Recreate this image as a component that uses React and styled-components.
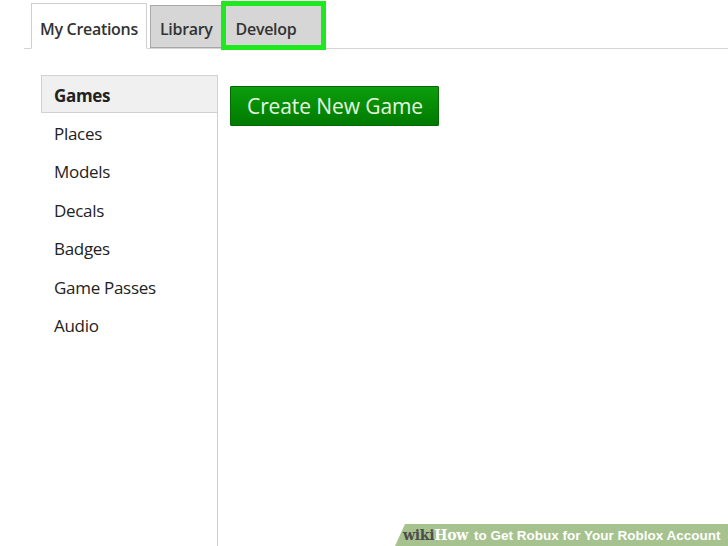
import React from "react";
import styled, { createGlobalStyle } from "styled-components";

const Global = createGlobalStyle`
  html, body { margin: 0; padding: 0; background: #fff; }
  body { font-family: "Open Sans", "Noto Sans", sans-serif; color: #222; }
  #root { min-height: 100vh; }
`;

const Page = styled.div`
  position: relative;
  height: 546px;
  overflow: hidden;
  display: flex;
  flex-direction: column;
`;

const TabBar = styled.div`
  margin-left: 24px;
  padding-left: 7px;
  height: 49px;
  border-bottom: 1px solid #d4d4d4;
  display: flex;
  align-items: flex-end;
  gap: 3px;
  box-sizing: border-box;
`;

const Tab = styled.div`
  box-sizing: border-box;
  height: ${(p) => (p.$active ? "46px" : "43px")};
  margin-bottom: ${(p) => (p.$active ? "-1px" : "0")};
  padding: 0 ${(p) => (p.$active ? 8 : 9)}px ${(p) => (p.$active ? 9 : 8)}px;
  display: flex;
  align-items: flex-end;
  font-size: 16px;
  line-height: 20px;
  font-weight: 600;
  color: #333;
  letter-spacing: -0.3px;
  background: ${(p) => (p.$active ? "#fff" : "#d6d6d6")};
  border: 1px solid ${(p) => (p.$active ? "#cfcfcf" : "#a8a8a8")};
  border-bottom: ${(p) => (p.$active ? "1px solid #fff" : "1px solid #a8a8a8")};
`;

const HighlightTab = styled(Tab)`
  width: 95px;
  height: 39px;
  margin-left: 0;
  margin-bottom: 3px;
  padding: 0 0 6px 10px;
  border: none;
  background: #d6d6d6;
  outline: 5px solid #1ee81e;
  outline-offset: 0;
`;

const Body = styled.div`
  flex: 1;
  display: flex;
  padding-top: 26px;
  padding-left: 41px;
  gap: 12px;
`;

const Sidebar = styled.nav`
  width: 177px;
  box-sizing: border-box;
  border-right: 1px solid #d0d0d0;
  display: flex;
  flex-direction: column;
`;

const NavItem = styled.div`
  box-sizing: border-box;
  height: 38.4px;
  display: flex;
  align-items: center;
  padding-top: 2px;
  font-size: 17px;
  letter-spacing: -0.3px;
  color: #222;
  font-weight: ${(p) => (p.$active ? 700 : 400)};
  background: ${(p) => (p.$active ? "#f0f0f0" : "transparent")};
  border: ${(p) => (p.$active ? "1px solid #d2d2d2" : "none")};
  margin-right: ${(p) => (p.$active ? "-1px" : "0")};
  padding-left: ${(p) => (p.$active ? "12px" : "13px")};
`;

const Content = styled.main`
  flex: 1;
  padding-top: 11px;
`;

const CreateButton = styled.button`
  box-sizing: border-box;
  width: 209px;
  height: 40px;
  padding: 0 0 0 16px;
  text-align: left;
  font-family: "Open Sans", "Noto Sans", sans-serif;
  font-size: 21px;
  letter-spacing: -0.1px;
  color: #e6f7e0;
  background: linear-gradient(#0c9e0c, #007a00);
  border: 1px solid #006a00;
  border-radius: 1px;
`;

const Watermark = styled.div`
  position: absolute;
  right: 0;
  bottom: 0;
  width: 333px;
  height: 22px;
  background: #a6c28e;
  clip-path: polygon(10px 0, 100% 0, 100% 100%, 0 100%);
  display: flex;
  align-items: center;
  padding-left: 8px;
  box-sizing: border-box;
  white-space: nowrap;
`;

const Wiki = styled.span`
  font-family: "DejaVu Serif", "Liberation Serif", serif;
  font-weight: 700;
  font-size: 14px;
  color: #4d4d4d;
  letter-spacing: -0.3px;
`;

const How = styled.span`
  font-family: "DejaVu Serif", "Liberation Serif", serif;
  font-weight: 700;
  font-size: 14px;
  color: #fff;
  letter-spacing: -0.3px;
  margin-right: 6px;
`;

const Title = styled.span`
  font-family: "Liberation Sans", Arial, sans-serif;
  font-weight: 700;
  font-size: 13.5px;
  color: #fff;
`;

const items = ["Games", "Places", "Models", "Decals", "Badges", "Game Passes", "Audio"];

export default function App() {
  return (
    <>
      <Global />
      <Page>
        <TabBar>
          <Tab $active>My Creations</Tab>
          <Tab>Library</Tab>
          <HighlightTab>Develop</HighlightTab>
        </TabBar>
        <Body>
          <Sidebar>
            {items.map((it, i) => (
              <NavItem key={it} $active={i === 0}>
                {it}
              </NavItem>
            ))}
          </Sidebar>
          <Content>
            <CreateButton>Create New Game</CreateButton>
          </Content>
        </Body>
        <Watermark>
          <Wiki>wiki</Wiki>
          <How>How</How>
          <Title>to Get Robux for Your Roblox Account</Title>
        </Watermark>
      </Page>
    </>
  );
}
